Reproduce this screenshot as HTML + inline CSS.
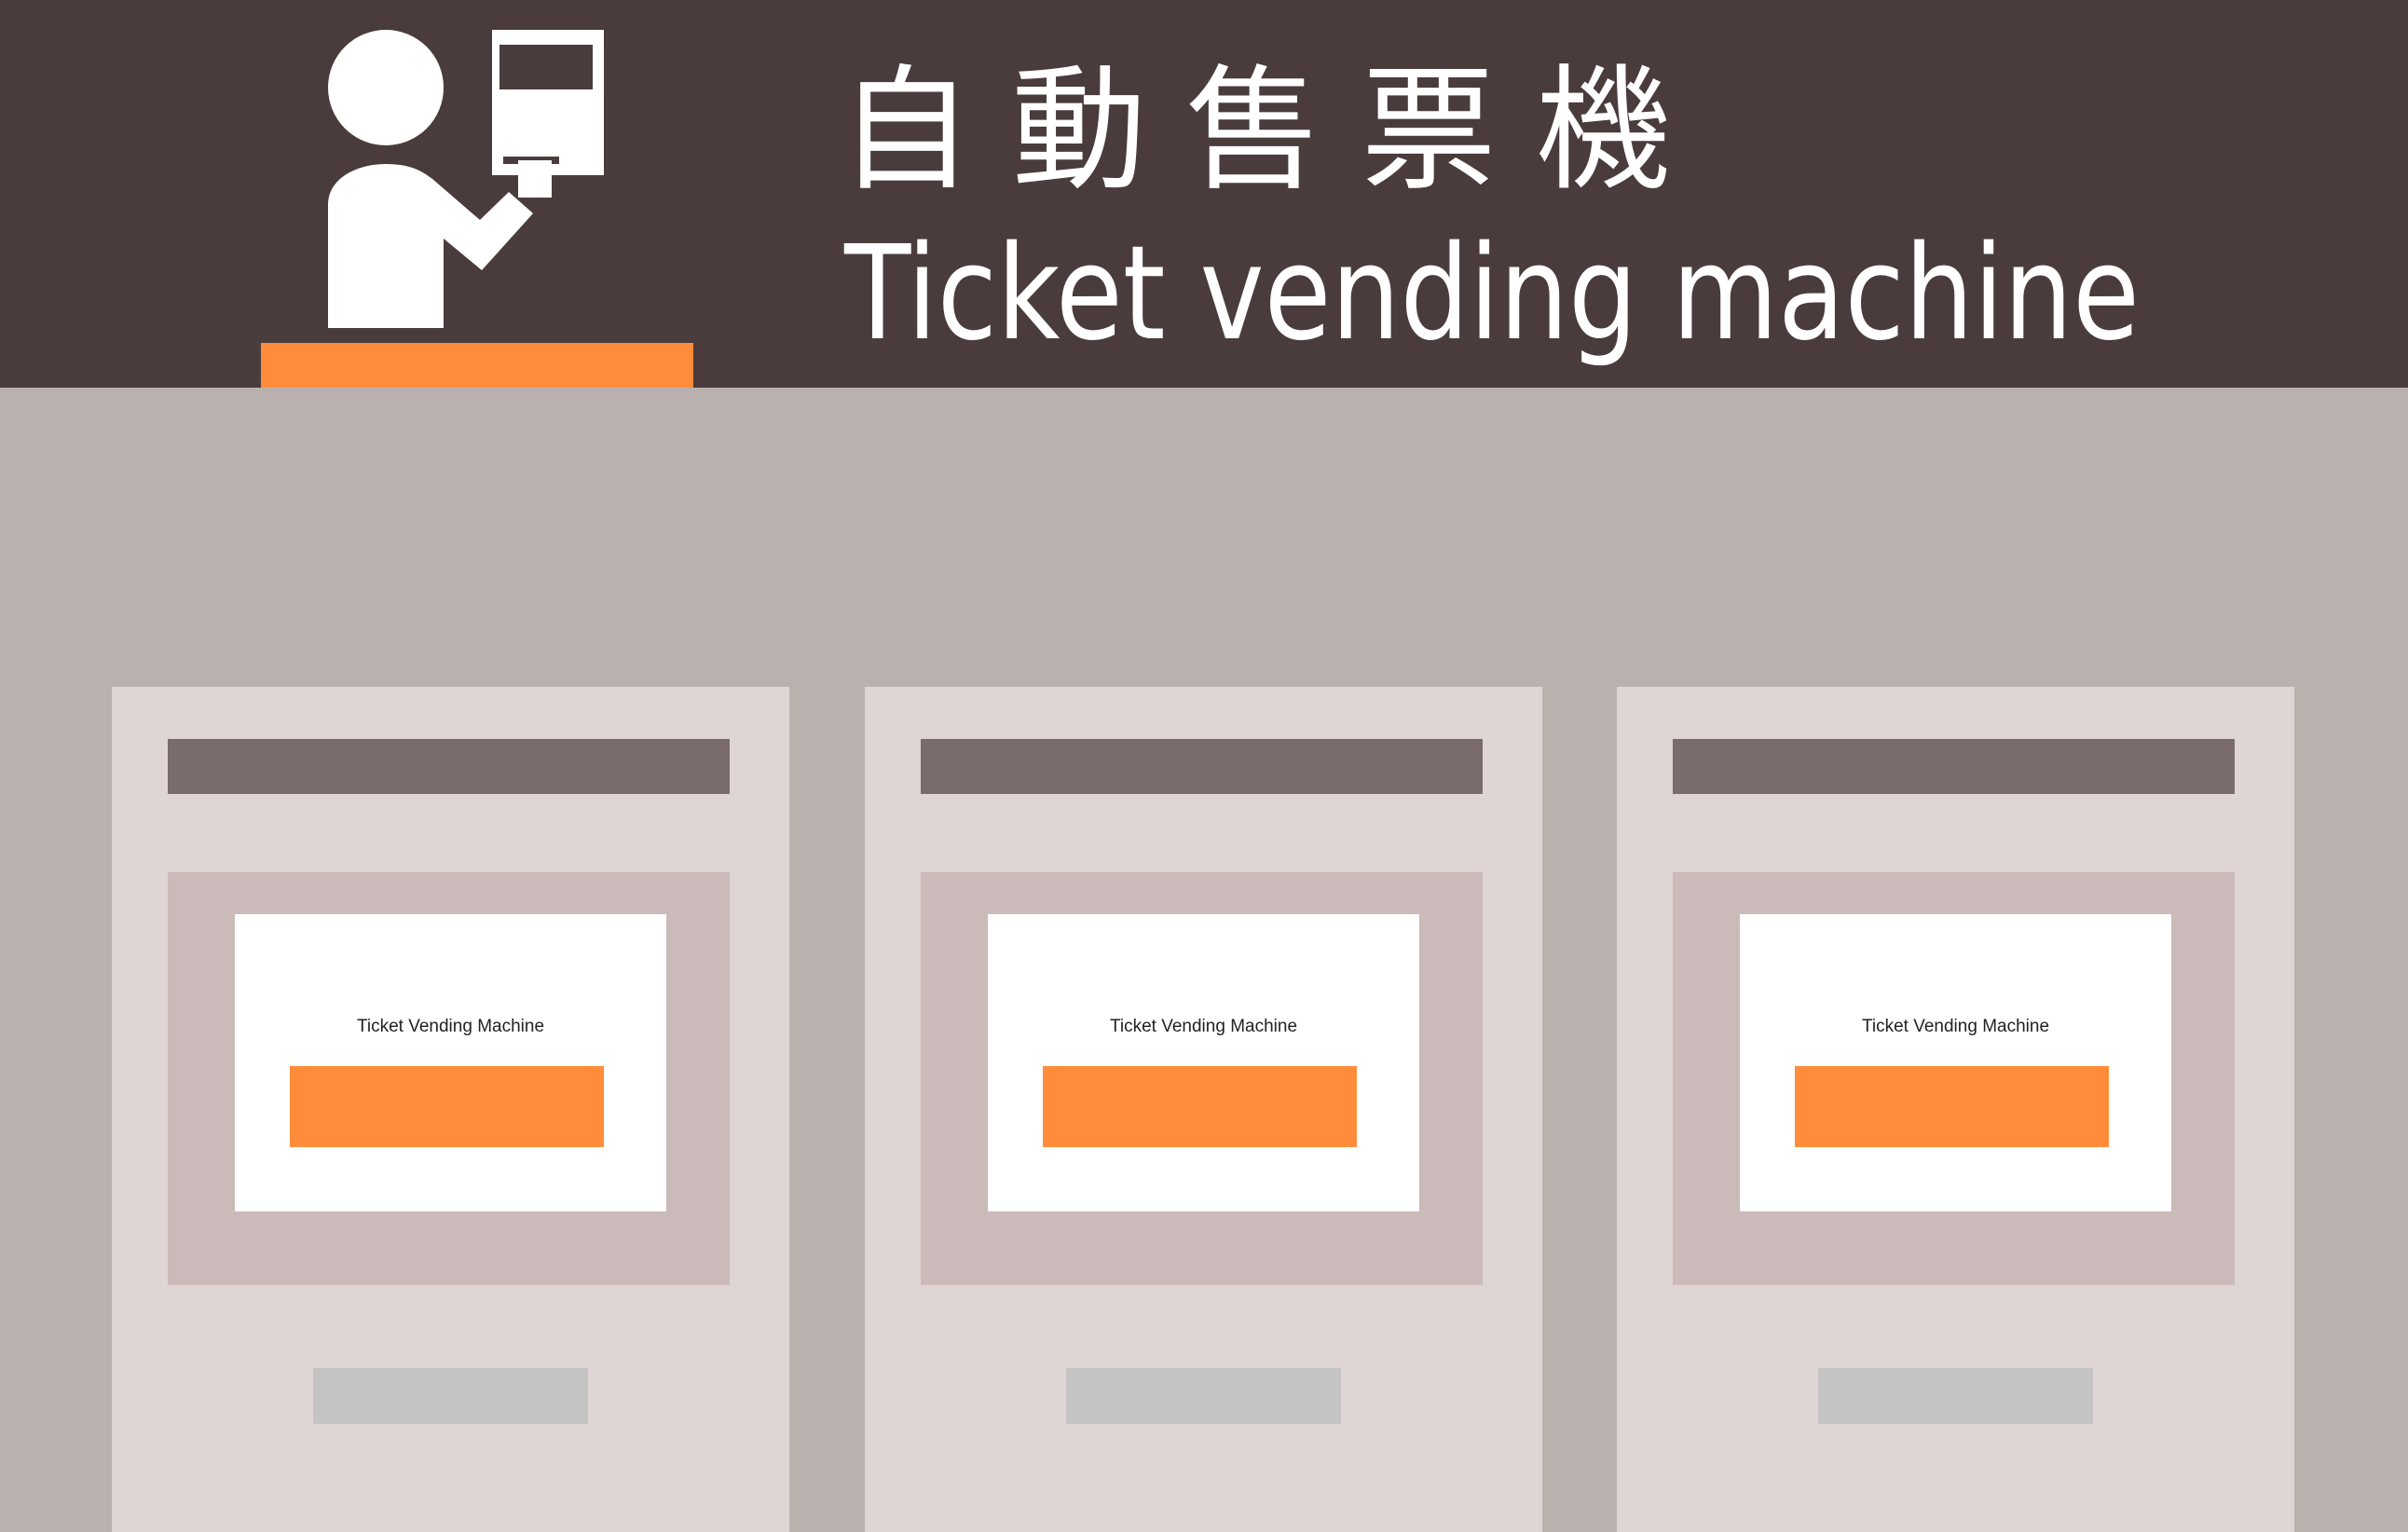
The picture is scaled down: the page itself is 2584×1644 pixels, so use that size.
<!DOCTYPE html>
<html><head><meta charset="utf-8"><style>
html,body{margin:0;padding:0}
body{width:2584px;height:1644px;overflow:hidden;background:#bab1af;position:relative;font-family:"Liberation Sans","Noto Sans CJK JP",sans-serif}
.a{position:absolute}
.m{position:absolute;top:737px;width:727px;height:907px;background:#ded5d4}
.bar{position:absolute;left:60px;top:56px;width:603px;height:59px;background:#7a6c6c}
.fr{position:absolute;left:60px;top:199px;width:603px;height:443px;background:#cabab9}
.wh{position:absolute;left:132px;top:244px;width:463px;height:319px;background:#fff}
.t{position:absolute;left:0;width:463px;top:110px;text-align:center;font-size:19px;color:#222}
.btn{position:absolute;left:191px;top:407px;width:337px;height:87px;background:#ff8c3a}
.slot{position:absolute;left:216px;top:731px;width:295px;height:60px;background:#c4c4c4}
</style></head><body>
<div class="a" style="left:0;top:0;width:2584px;height:416px;background:#4a3c3d"></div>
<div class="a" style="left:280px;top:368px;width:464px;height:48px;background:#ff8c3a"></div>
<svg class="a" style="left:0;top:0" width="2584" height="416">
<circle cx="414" cy="94" r="62" fill="#fff"/>
<path d="M352 352 V220 C352 190 385 176 414 176 C440 176 452 183 464 192 L515 236 L546 206 L572 229 L517 290 L476 256 V352 Z" fill="#fff"/>
<rect x="528" y="32" width="120" height="156" fill="#fff"/>
<rect x="536" y="48" width="100" height="48" fill="#4a3c3d"/>
<rect x="540" y="168" width="60" height="8" fill="#4a3c3d"/>
<rect x="556" y="172" width="36" height="40" fill="#fff"/>
<g fill="#fff" font-family="Noto Sans CJK JP, sans-serif" font-size="145" text-anchor="middle">
<text x="972" y="190">自</text><text x="1158" y="190">動</text><text x="1344" y="190">售</text><text x="1533" y="190">票</text><text x="1720" y="190">機</text>
</g>
<text x="906" y="363" font-family="DejaVu Sans Condensed, DejaVu Sans, sans-serif" font-stretch="condensed" font-weight="normal" font-size="140" fill="#fff" textLength="1390" lengthAdjust="spacingAndGlyphs">Ticket vending machine</text>
</svg>
<div class="m" style="left:120px"><div class="bar"></div><div class="fr"></div><div class="wh"><div class="t">Ticket Vending Machine</div></div><div class="btn"></div><div class="slot"></div></div>
<div class="m" style="left:928px"><div class="bar"></div><div class="fr"></div><div class="wh"><div class="t">Ticket Vending Machine</div></div><div class="btn"></div><div class="slot"></div></div>
<div class="m" style="left:1735px"><div class="bar"></div><div class="fr"></div><div class="wh"><div class="t">Ticket Vending Machine</div></div><div class="btn"></div><div class="slot"></div></div>
</body></html>
